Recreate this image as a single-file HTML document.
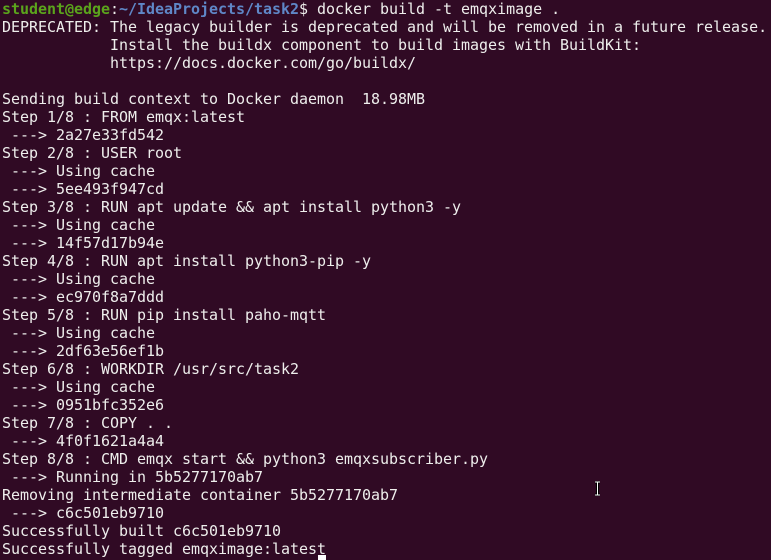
<!DOCTYPE html>
<html><head><style>
html,body{margin:0;padding:0;background:#300a24;width:771px;height:560px;overflow:hidden}
pre{margin:0;padding:0 0 0 2px;font-family:"DejaVu Sans Mono","Liberation Mono",monospace;font-size:15px;line-height:18px;color:#eeeeec;white-space:pre;position:relative;top:0px;letter-spacing:-0.03px}
.g{color:#5ba41c;font-weight:bold}.b{color:#5f87c7;font-weight:bold}
.cur{position:absolute;left:318px;top:555px;width:8px;height:5px;background:#fff}
.ib{position:absolute;left:594px;top:481px;width:7px;height:15px}
</style></head><body>
<pre><span class="g">student@edge</span>:<span class="b">~/IdeaProjects/task2</span>$ docker build -t emqximage .
DEPRECATED: The legacy builder is deprecated and will be removed in a future release.
            Install the buildx component to build images with BuildKit:
            https://docs.docker.com/go/buildx/

Sending build context to Docker daemon  18.98MB
Step 1/8 : FROM emqx:latest
 ---&gt; 2a27e33fd542
Step 2/8 : USER root
 ---&gt; Using cache
 ---&gt; 5ee493f947cd
Step 3/8 : RUN apt update &amp;&amp; apt install python3 -y
 ---&gt; Using cache
 ---&gt; 14f57d17b94e
Step 4/8 : RUN apt install python3-pip -y
 ---&gt; Using cache
 ---&gt; ec970f8a7ddd
Step 5/8 : RUN pip install paho-mqtt
 ---&gt; Using cache
 ---&gt; 2df63e56ef1b
Step 6/8 : WORKDIR /usr/src/task2
 ---&gt; Using cache
 ---&gt; 0951bfc352e6
Step 7/8 : COPY . .
 ---&gt; 4f0f1621a4a4
Step 8/8 : CMD emqx start &amp;&amp; python3 emqxsubscriber.py
 ---&gt; Running in 5b5277170ab7
Removing intermediate container 5b5277170ab7
 ---&gt; c6c501eb9710
Successfully built c6c501eb9710
Successfully tagged emqximage:latest</pre>
<div class="cur"></div>
<svg class="ib" viewBox="0 0 7 15"><path d="M1 1H6M3.5 1V14M1 14H6" stroke="#000" stroke-width="3"/><path d="M1 1H6M3.5 1V14M1 14H6" stroke="#fff" stroke-width="1"/></svg>
</body></html>
